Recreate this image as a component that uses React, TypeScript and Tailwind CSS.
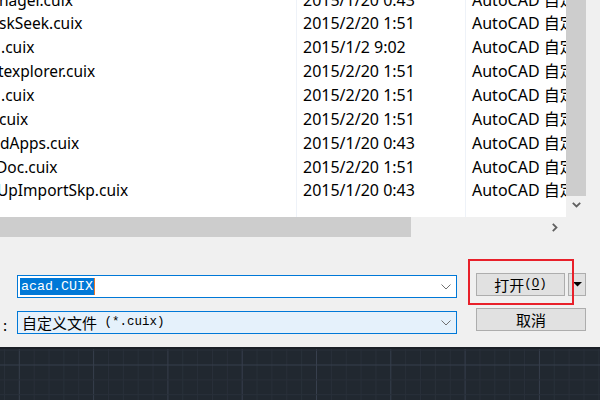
import React from 'react';

const rows = [
  { name: 'nager.cuix', off: -1, date: '2015/1/20 0:43' },
  { name: 'skSeek.cuix', off: -1, date: '2015/2/20 1:51' },
  { name: '.cuix', off: 1, date: '2015/1/2 9:02' },
  { name: 'texplorer.cuix', off: -2, date: '2015/2/20 1:51' },
  { name: '.cuix', off: 1, date: '2015/2/20 1:51' },
  { name: 'cuix', off: -1, date: '2015/2/20 1:51' },
  { name: 'dApps.cuix', off: 0, date: '2015/1/20 0:43' },
  { name: 'Doc.cuix', off: -4, date: '2015/2/20 1:51' },
  { name: 'UpImportSkp.cuix', off: -3, date: '2015/1/20 0:43' },
];

const listFont = { fontFamily: '"Noto Sans", "Noto Sans CJK SC", sans-serif' };
const cjk = { fontFamily: '"Noto Sans CJK SC", sans-serif' };
const mono = { fontFamily: '"Liberation Mono", "Noto Sans CJK SC", monospace' };

const Chevron = ({ className = '' }: { className?: string }) => (
  <svg width="10" height="6" viewBox="0 0 10 6" className={className}>
    <path d="M0.5 0.5 L5 5 L9.5 0.5" fill="none" stroke="currentColor" strokeWidth="1" />
  </svg>
);

const Grid = () => {
  const minor = 14.86;
  const xs: number[] = [];
  for (let i = -2; i < 42; i++) xs.push(19.3 + i * minor);
  const ys = [3.1, 18, 32.9, 47.7];
  return (
    <svg width="600" height="53" className="block">
      <rect width="600" height="53" fill="#212830" />
      {xs.map((x, i) => (
        <line key={'x' + i} x1={x} y1="0" x2={x} y2="53"
          stroke={((i + 10) % 5 === 2) ? '#373f4d' : '#29303a'} strokeWidth="1" />
      ))}
      {ys.map((y, i) => (
        <line key={'y' + i} x1="0" y1={y} x2="600" y2={y}
          stroke={i === 1 ? '#373f4d' : '#29303a'} strokeWidth="1" />
      ))}
      <rect width="600" height="2" fill="#1b2027" />
    </svg>
  );
};

export default function App() {
  return (
    <div className="w-[600px] h-[400px] overflow-hidden bg-[#f0f0f0] flex flex-col relative">
      {/* File list + scrollbars */}
      <div className="flex h-[237px]">
        <div className="w-[586px] flex flex-col">
          <div className="flex h-[217px]">
            <div className="w-[566px] bg-white overflow-hidden flex text-[16px] text-black" style={listFont}>
              <div className="w-[297px] shrink-0 border-r border-[#eef2f8] overflow-hidden text-[15.5px]">
                <div className="mt-[-11.5px]">
                  {rows.map((r, i) => (
                    <div key={i} className="h-[23.86px] leading-[23.86px] whitespace-nowrap" style={{ marginLeft: r.off }}>
                      {r.name}
                    </div>
                  ))}
                </div>
              </div>
              <div className="w-[169px] shrink-0 border-r border-[#eef2f8] pl-[6px]">
                <div className="mt-[-11.5px]">
                  {rows.map((r, i) => (
                    <div key={i} className="h-[23.86px] leading-[23.86px] whitespace-nowrap">{r.date}</div>
                  ))}
                </div>
              </div>
              <div className="flex-1 pl-[6px] overflow-hidden">
                <div className="mt-[-11.5px]">
                  {rows.map((_, i) => (
                    <div key={i} className="h-[23.86px] leading-[23.86px] whitespace-nowrap">AutoCAD 自定义文件</div>
                  ))}
                </div>
              </div>
            </div>
            {/* vertical scrollbar */}
            <div className="w-[20px] flex flex-col bg-[#f0f0f0]">
              <div className="h-[196px] bg-[#cdcdcd]" />
              <div className="flex-1 flex items-center justify-center text-[#606060] pb-[3px]">
                <svg width="9" height="6" viewBox="0 0 9 6">
                  <path d="M0.8 0.8 L4.5 4.5 L8.2 0.8" fill="none" stroke="currentColor" strokeWidth="1.8" />
                </svg>
              </div>
            </div>
          </div>
          {/* horizontal scrollbar */}
          <div className="h-[20px] flex">
            <div className="w-[411px] bg-[#cdcdcd]" />
            <div className="w-[155px] flex items-center justify-end pr-[8px] text-[#606060]">
              <svg width="6" height="9" viewBox="0 0 6 9">
                <path d="M0.8 0.8 L4.5 4.5 L0.8 8.2" fill="none" stroke="currentColor" strokeWidth="1.8" />
              </svg>
            </div>
          </div>
        </div>
        <div className="flex-1" />
      </div>

      {/* Dialog controls */}
      <div className="h-[110px] flex">
        <div className="flex flex-col pt-[38px]">
          <div className="flex h-[23px]">
            <div className="w-[17px]" />
            <div className="w-[440px] h-[23px] bg-white border border-[#0078d7] flex items-center pl-[2px] pr-[5px]">
              <span className="h-[17px] bg-[#0078d7] text-white text-[13.33px] leading-[17px] px-[1px]" style={mono}>acad.CUIX</span>
              <span className="w-[1px] h-[17px] bg-[#e9772a]" />
              <div className="flex-1" />
              <Chevron className="text-[#707070]" />
            </div>
          </div>
          <div className="flex h-[23px] mt-[13px]">
            <div className="w-[17px] pl-[3px] flex items-end pb-[2px] text-[15px] leading-[15px] text-black" style={cjk}>:</div>
            <div className="w-[440px] h-[23px] bg-[#e5f1fb] border border-[#0078d7] flex items-center pl-[4px] pr-[5px] text-black">
              <span className="text-[15px] leading-[21px]" style={cjk}>自定义文件</span>
              <span className="text-[12.5px] leading-[21px] whitespace-pre" style={mono}> (*.cuix)</span>
              <div className="flex-1" />
              <Chevron className="text-[#707070]" />
            </div>
          </div>
        </div>
        <div className="flex flex-col pt-[36px] ml-[19px]">
          <div className="flex h-[23px] gap-[3px]">
            <div className="w-[89px] h-[23px] bg-[#e1e1e1] border border-[#adadad] flex items-center justify-center text-black">
              <span className="text-[15px] leading-[21px]" style={cjk}>打开</span>
              <span className="text-[12.5px] leading-[21px]" style={mono}>(<span className="underline underline-offset-2">O</span>)</span>
            </div>
            <div className="w-[18px] h-[23px] bg-[#e1e1e1] border border-[#adadad] flex items-center justify-center">
              <svg width="9" height="5" viewBox="0 0 9 5">
                <path d="M0 0 L9 0 L4.5 4.5 Z" fill="#000" />
              </svg>
            </div>
          </div>
          <div className="w-[110px] h-[23px] mt-[12px] bg-[#e1e1e1] border border-[#adadad] flex items-center justify-center text-black">
            <span className="text-[15px] leading-[21px]" style={cjk}>取消</span>
          </div>
        </div>
      </div>

      {/* Annotation box */}
      <div className="absolute left-[468px] top-[259px] w-[106px] h-[46px] border-2 border-[#e8202a]" />

      {/* AutoCAD drawing area */}
      <div className="h-[53px]">
        <Grid />
      </div>
    </div>
  );
}
